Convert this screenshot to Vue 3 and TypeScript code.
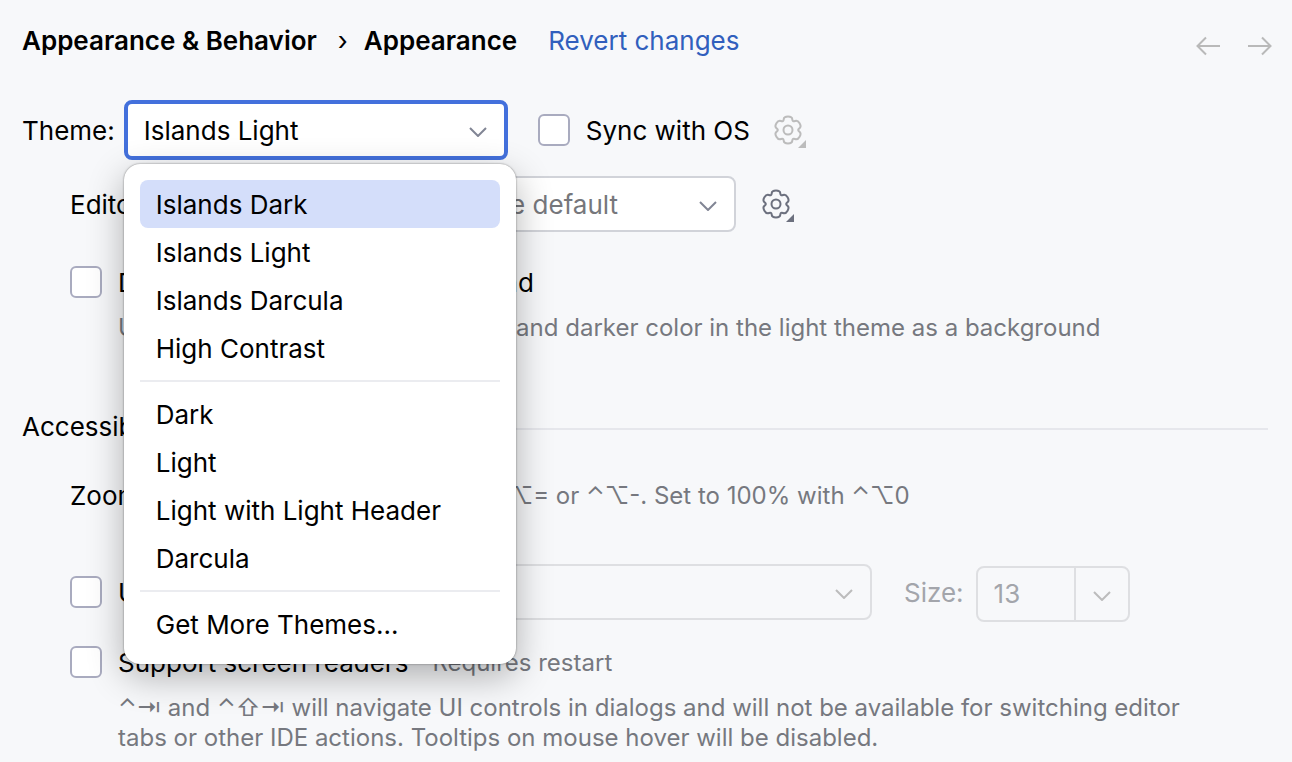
<script setup lang="ts">
import { ref } from 'vue'

const themeGroups: string[][] = [
  ['Islands Dark', 'Islands Light', 'Islands Darcula', 'High Contrast'],
  ['Dark', 'Light', 'Light with Light Header', 'Darcula'],
  ['Get More Themes...'],
]

const theme = ref('Islands Light')
const highlighted = ref('Islands Dark')
const fontSize = ref('13')

type Point = { x: number; y: number }

// Six-lobed gear outline, its corners rounded through the edge midpoints.
function gearOutline(cx: number, cy: number): string {
  const points: Point[] = []
  const add = (deg: number, r: number) => {
    const a = (deg * Math.PI) / 180
    points.push({ x: cx + r * Math.cos(a), y: cy + r * Math.sin(a) })
  }
  for (let i = 0; i < 6; i++) {
    const lobe = 30 + i * 60
    add(lobe - 17, 14)
    add(lobe + 17, 14)
    add(lobe + 30, 9)
  }
  const mid = (a: Point, b: Point) => `${((a.x + b.x) / 2).toFixed(2)} ${((a.y + b.y) / 2).toFixed(2)}`
  let d = `M${mid(points[points.length - 1], points[0])}`
  points.forEach((p, i) => {
    d += `Q${p.x.toFixed(2)} ${p.y.toFixed(2)} ${mid(p, points[(i + 1) % points.length])}`
  })
  return d + 'Z'
}

const gear = gearOutline(16, 18)
</script>

<template>
  <main class="page">
    <header class="header">
      <nav class="crumbs" aria-label="Breadcrumb">
        <span>Appearance &amp; Behavior</span>
        <span class="crumb-sep">›</span>
        <span>Appearance</span>
      </nav>
      <a class="revert" href="#">Revert changes</a>
      <div class="history">
        <button type="button" class="icon-button" aria-label="Back" disabled>
          <svg width="24" height="20" viewBox="0 0 24 20"><path d="M10 1.500 1.500 10l8.500 8.500M1.500 10H24" /></svg>
        </button>
        <button type="button" class="icon-button" aria-label="Forward" disabled>
          <svg width="24" height="20" viewBox="0 0 24 20"><path d="M14 1.500 22.500 10 14 18.500M22.500 10H0" /></svg>
        </button>
      </div>
    </header>

    <div class="row theme-row">
      <label for="theme" class="text">Theme:</label>
      <div class="theme-anchor">
        <div class="combo focused theme-combo">
          <select id="theme" v-model="theme">
            <option v-for="name in themeGroups.flat()" :key="name">{{ name }}</option>
          </select>
          <svg class="chevron" width="18" height="10" viewBox="0 0 18 10"><path d="m1 1 8 8 8-8" /></svg>
        </div>
        <div class="popup" role="listbox" aria-label="Theme">
          <div v-for="(group, index) in themeGroups" :key="index" class="popup-group" role="group">
            <button
              v-for="name in group"
              :key="name"
              type="button"
              role="option"
              class="option"
              :class="{ active: name === highlighted }"
              :aria-selected="name === theme"
              @mouseenter="highlighted = name"
              @click="theme = name"
            >{{ name }}</button>
          </div>
        </div>
      </div>
      <label class="check sync"><input type="checkbox" /><span class="text">Sync with OS</span></label>
      <button type="button" class="icon-button gear dim" aria-label="Sync settings" disabled>
        <svg width="36" height="36" viewBox="0 0 36 36">
          <path :d="gear" /><circle cx="16" cy="18" r="4.500" /><path class="corner" d="M34 28v8h-8z" />
        </svg>
      </button>
    </div>

    <div class="row indent scheme-row">
      <label for="scheme" class="text scheme-label">Editor color scheme:</label>
      <div class="combo scheme-combo">
        <select id="scheme"><option>Theme default</option></select>
        <svg class="chevron" width="18" height="10" viewBox="0 0 18 10"><path d="m1 1 8 8 8-8" /></svg>
      </div>
      <button type="button" class="icon-button gear" aria-label="Scheme settings">
        <svg width="36" height="36" viewBox="0 0 36 36">
          <path :d="gear" /><circle cx="16" cy="18" r="4.500" /><path class="corner" d="M34 28v8h-8z" />
        </svg>
      </button>
    </div>

    <div class="row indent background-row">
      <label class="check"><input type="checkbox" /><span class="text">Different tool window background</span></label>
    </div>
    <p class="comment">Use lighter color in the dark theme and darker color in the light theme as a background</p>

    <div class="row section">
      <h2>Accessibility</h2>
      <hr />
    </div>

    <div class="row indent zoom-row">
      <label for="zoom" class="text">Zoom:</label>
      <div class="combo zoom-combo">
        <select id="zoom"><option>100%</option></select>
      </div>
      <span class="text hint">Change with ⌃⌥= or ⌃⌥-. Set to 100% with ⌃⌥0</span>
    </div>

    <div class="row indent font-row">
      <label class="check font-check"><input type="checkbox" /><span class="text">Use custom font:</span></label>
      <div class="combo disabled font-combo">
        <select aria-label="Font" disabled><option>Inter</option></select>
        <svg class="chevron" width="18" height="10" viewBox="0 0 18 10"><path d="m1 1 8 8 8-8" /></svg>
      </div>
      <label for="size" class="text size-label">Size:</label>
      <div class="size-box">
        <input id="size" v-model="fontSize" type="text" disabled />
        <button type="button" aria-label="Font sizes" disabled>
          <svg width="18" height="10" viewBox="0 0 18 10"><path d="m1 1 8 8 8-8" /></svg>
        </button>
      </div>
    </div>

    <div class="row indent reader-row">
      <label class="check"><input type="checkbox" /><span class="text">Support screen readers</span></label>
      <span class="text hint">Requires restart</span>
    </div>
    <p class="comment">
      ⌃⇥ and ⌃⇧⇥ will navigate UI controls in dialogs and will not be available for switching editor tabs or other IDE
      actions. Tooltips on mouse hover will be disabled.
    </p>
  </main>
</template>

<style>
body {
  background: #f7f8fa;
}
</style>

<style scoped>
.page {
  box-sizing: border-box;
  min-height: 100vh;
  padding: 0 24px 8px 22px;
  background: #f7f8fa;
  color: #000;
  font-family: Inter, "Liberation Sans", sans-serif;
  font-size: 26px;
  line-height: 30px;
  white-space: nowrap;
}

button,
select,
input {
  box-sizing: border-box;
  margin: 0;
  padding: 0;
  border: 0;
  background: none;
  color: inherit;
  font: inherit;
}

svg {
  display: block;
  fill: none;
  stroke: #818594;
  stroke-width: 2;
}

.header {
  display: flex;
  align-items: center;
  height: 82px;
}

.crumbs {
  display: flex;
  font-weight: 600;
}

.crumb-sep {
  margin: 0 16px 0 21px;
  font-weight: 400;
}

.revert {
  margin-left: 31px;
  color: #315fbd;
  text-decoration: none;
}

.history {
  display: flex;
  gap: 28px;
  margin: 10px -4px 0 auto;
}

.history svg {
  stroke: #b9b9b9;
}

.row {
  display: flex;
  align-items: center;
}

.text {
  padding-top: 2px;
}

.indent {
  padding-left: 48px;
}

.theme-row {
  gap: 9px;
  margin-top: 18px;
}

.theme-anchor {
  position: relative;
}

.combo {
  box-sizing: border-box;
  display: grid;
  align-items: center;
  height: 56px;
  border: 2px solid #d1d3d9;
  border-radius: 8px;
  background: #fff;
}

.combo > * {
  grid-area: 1 / 1;
}

.combo select {
  width: 100%;
  height: 100%;
  padding: 2px 44px 0 16px;
  appearance: none;
  outline: 0;
}

.chevron {
  justify-self: end;
  margin: 4px 17px 0 0;
  pointer-events: none;
}

.focused {
  height: 60px;
  border: 4px solid #4370dc;
}

.theme-combo {
  width: 384px;
}

.check {
  display: flex;
  align-items: center;
  gap: 16px;
}

.check input {
  width: 32px;
  height: 32px;
  border: 2px solid #a9abbf;
  border-radius: 6px;
  background: #fff;
  appearance: none;
}

.sync {
  margin-left: 21px;
}

.gear {
  margin-left: 13px;
}

.gear svg {
  stroke: #6c707e;
}

.gear .corner {
  fill: #6c707e;
  stroke: none;
}

.dim svg {
  stroke: #bcbcbc;
}

.dim .corner {
  fill: #bcbcbc;
}

.scheme-row {
  margin-top: 16px;
}

.scheme-label {
  width: 352px;
}

.scheme-combo {
  width: 314px;
  color: #76777c;
}

.scheme-row .gear {
  margin-left: 24px;
}

.background-row {
  margin-top: 34px;
}

.comment {
  max-width: 1080px;
  margin: 15px 0 0 96px;
  color: #76787f;
  font-size: 24px;
  line-height: 30px;
  white-space: normal;
}

.section {
  gap: 16px;
  margin-top: 69px;
}

.section h2 {
  margin: 0;
  font-size: 26px;
  font-weight: 400;
}

.section hr {
  flex: 1;
  height: 2px;
  margin: 4px 0 0;
  border: 0;
  background: #e6e7ec;
}

.zoom-row {
  gap: 12px;
  margin-top: 25px;
}

.zoom-combo {
  width: 169px;
}

.hint {
  color: #76787f;
  font-size: 24px;
}

.font-row {
  margin-top: 39px;
}

.font-check {
  width: 282px;
}

.font-combo {
  width: 520px;
}

.disabled {
  border-color: #dedfe2;
  background: transparent;
  color: #a3a5ab;
}

.disabled svg,
.size-box svg {
  stroke: #bcbcbc;
}

.size-label {
  margin: 0 12px 0 32px;
  color: #a3a5ab;
}

.size-box {
  box-sizing: border-box;
  display: flex;
  width: 154px;
  height: 56px;
  margin-top: 4px;
  border: 2px solid #dedfe2;
  border-radius: 8px;
  color: #a3a5ab;
}

.size-box input {
  flex: 1;
  min-width: 0;
  padding-left: 16px;
}

.size-box button {
  display: grid;
  place-items: center;
  width: 54px;
  padding-top: 4px;
  border-left: 2px solid #dedfe2;
}

.reader-row {
  gap: 24px;
  margin-top: 24px;
}

.popup {
  position: absolute;
  z-index: 1;
  top: 64px;
  left: 0;
  box-sizing: border-box;
  width: 392px;
  padding: 16px;
  border-radius: 16px;
  background: #fff;
  box-shadow: 0 0 2px rgba(0, 0, 0, 0.5), 0 12px 36px rgba(0, 0, 0, 0.3);
}

.popup-group + .popup-group {
  margin-top: 8px;
  padding-top: 8px;
  border-top: 2px solid #ebecf0;
}

.option {
  display: block;
  width: 100%;
  height: 48px;
  padding: 2px 16px 0;
  border-radius: 8px;
  text-align: left;
}

.active {
  background: #d4defa;
}
</style>
